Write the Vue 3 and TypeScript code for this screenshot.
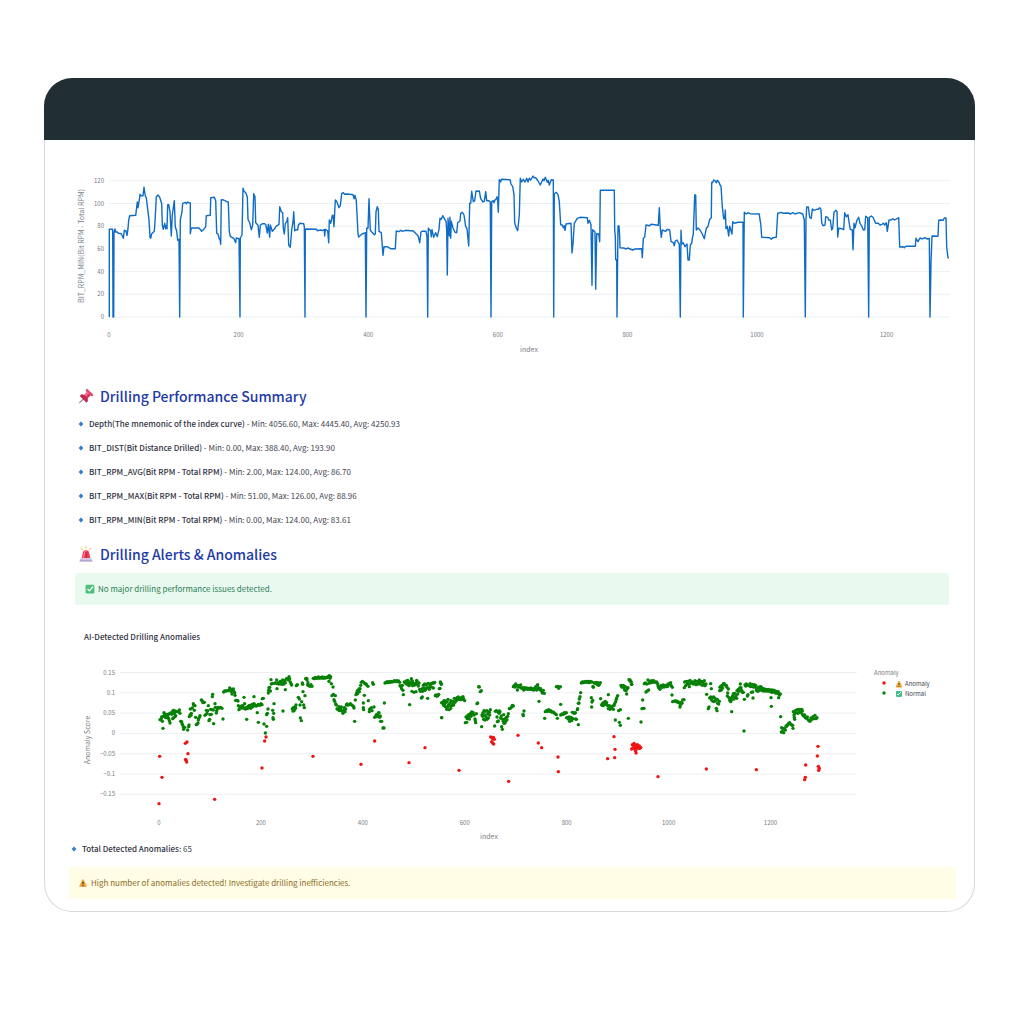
<script setup lang="ts">
interface Trace {
  dx: number
  dy: number
  pts: string
}
interface Point {
  x: number
  y: number
}

// Traces are stored at three units per chart pixel, split in windows with their own origin.
const unit = 3

function decode(t: Trace): Point[] {
  return t.pts
    .trim()
    .split(/\s+/)
    .map((pair) => {
      const [x, y] = pair.split(',').map(Number)
      return { x: t.dx + x / unit, y: t.dy + y / unit }
    })
}

const rpm: Trace[] = [
  {
    dx: 15,
    dy: 20,
    pts: `148,471 148,208 158,208 159,471 161,471 162,218 165,207 167,216 172,216 175,220 184,221 190,235 193,211 198,213 201,226 204,206 206,180 209,167 227,166 232,126 234,143 239,112 240,103 243,107 249,107 252,82 256,108 259,113 264,155 267,180 270,232 272,235 275,221 283,214 285,186 289,110 294,105 299,112 305,131 307,195 310,208 314,190 317,206 320,196 321,206 323,134 326,134 330,155 334,228 337,165 343,122 346,200 350,214 353,241 357,238 359,471 361,180 366,155 368,130 376,127 379,131 383,126 388,129 391,129 391,221 394,204 417,204 425,214 433,206 437,200 439,167 451,166 452,113 463,112 467,122 470,220 474,222 478,237 480,237 482,253 484,119 491,120 500,125 505,126 508,215 511,229 522,236 527,248 529,234 537,236 540,471 541,234 546,225 549,85 552,94 557,98 562,110 564,178 569,188 574,209 578,195 581,101 585,110 587,188 594,196 598,232 601,196 607,191 613,191 617,193 622,219 625,193 629,232 631,195 637,214 645,205 648,199 657,193 659,140 664,155 668,158 670,205 673,222 676,191 680,185 683,173 686,255 691,262 695,210 699,185 701,155 704,212 710,209 713,210 715,196 720,190`,
  },
  {
    dx: 235,
    dy: 20,
    pts: `60,190 71,191 73,200 75,471 76,207 110,208 112,212 122,210 127,212 133,209 134,228 136,208 143,213 146,248 148,180 152,190 157,166 159,166 162,200 166,120 170,124 177,143 181,137 185,101 190,98 194,103 203,102 219,104 222,116 225,106 229,122 234,221 236,231 246,222 256,218 258,471 260,205 264,205 267,116 271,211 276,217 283,224 286,222 288,155 292,140 295,148 297,214 304,218 309,286 312,260 321,260 332,266 346,266 349,213 356,215 362,211 367,214 377,211 400,213 414,227 419,248 423,216 426,214 438,214 441,230 443,471 445,205 452,213 454,230 456,209 461,232 467,218 472,230 477,208 480,175 484,178 488,167 498,185 500,209 502,345 504,175 508,228 510,172 512,235 514,184 519,204 525,217 530,218 533,188 540,183 542,160 547,157 552,165 557,200 561,206 566,258 569,130 572,130 575,94 580,125 584,122 588,93 594,94 598,93 602,116 609,126 613,124 617,95 620,122 627,122 631,126 633,471 635,125 640,122 642,128 645,120 649,116 651,110 653,124 655,157 658,59 662,66 664,58 690,59`,
  },
  {
    dx: 455,
    dy: 20,
    pts: `30,59 33,72 38,80 42,104 44,188 49,204 53,212 58,165 61,55 65,66 70,58 75,66 80,55 84,66 88,55 92,60 99,48 103,53 107,53 114,63 121,75 129,57 132,62 136,52 142,67 145,61 148,75 154,59 160,60 161,471 163,101 169,97 174,104 178,125 182,194 187,195 190,203 193,197 195,211 198,192 213,190 216,279 219,252 223,190 232,175 240,172 262,173 264,190 268,181 273,194 276,376 278,209 285,216 287,388 290,221 296,222 299,245 301,91 343,91 344,209 346,228 347,299 350,299 351,471 354,198 357,198 359,232 360,263 371,264 379,267 383,264 398,270 405,267 425,266 427,293 430,235 434,232 438,195 449,197 453,193 475,196 478,143 481,205 484,232 487,210 497,214 502,208 509,210 513,244 520,248 523,257 526,243 531,240 536,250 538,252 541,471 543,211 545,252 550,248 555,260 561,252 564,300 568,300 571,255 575,250 577,235 580,222 584,105 587,105 589,210 594,204 600,210 607,222 613,236 619,205 624,199 629,178 634,173 635,67 638,68 641,60 645,62 649,68 652,61 658,68 660,75 663,78 667,140 671,176 674,176 676,150 678,206 682,199 686,228 689,199 696,222 698,185 703,190 715,187`,
  },
  {
    dx: 675,
    dy: 20,
    pts: `55,187 69,187 70,471 73,157 79,162 84,158 90,161 118,162 120,180 122,190 125,232 149,233 154,238 158,233 169,232 173,160 180,158 184,157 190,160 205,159 212,162 218,158 225,162 238,158 248,162 253,180 256,471 258,180 260,141 265,141 269,172 274,175 277,147 281,151 290,148 295,148 299,143 303,149 305,188 309,197 315,195 317,170 323,172 326,180 331,180 335,210 338,205 342,157 348,151 351,155 353,231 356,205 365,206 371,209 374,158 379,170 384,164 386,180 391,208 397,210 399,269 402,190 405,203 411,180 416,172 420,190 425,198 430,210 434,209 437,169 443,173 446,471 448,172 454,168 459,172 467,190 475,190 480,195 486,193 490,190 494,195 499,188 502,214 504,200 507,180 513,180 518,176 524,180 536,173 539,261 548,260 553,263 558,259 586,259 588,235 594,245 600,234 607,237 614,233 622,237 628,235 630,471 633,309 636,228 654,229 656,181 664,180 669,181 673,174 678,174 680,262 684,293 687,293`,
  },
]

const rpmLine = rpm
  .flatMap(decode)
  .map((p) => `${p.x.toFixed(1)},${p.y.toFixed(1)}`)
  .join(' ')

const normal: Trace[] = [
  {
    dx: 15,
    dy: -30,
    pts: `300,299 304,297 305,291 307,304 309,325 309,289 312,278 314,284 316,289 317,293 319,283 321,290 323,287 324,293 326,296 328,302 330,309 326,282 332,279 335,283 337,276 340,271 342,276 343,281 345,273 338,296 341,293 345,290 347,287 348,275 352,275 356,274 358,270 360,280 362,304 365,305 366,311 368,315 370,321 371,328 374,322 383,330 386,320 387,315 388,290 390,285 391,267 393,286 394,280 397,264 400,251 401,255 403,271 405,257 407,292 409,314 411,313 414,309 415,300 416,296 418,292 420,287 424,240 427,243 431,247 433,247 429,248 435,286 438,283 439,271 441,280 443,272 445,257 447,302 449,298 450,284 452,268 454,283 456,269 457,230 458,223 460,270 461,311 465,251 466,262 469,279 470,273 472,267 474,262 478,264 482,262 486,265 489,297 491,216 494,213 498,213 502,212 506,212 509,204 511,207 513,214 514,209 516,222 518,208 520,207 521,214 524,218 525,226 527,241 531,241 534,243 535,257 537,269 539,265 541,260 544,264 546,257 549,258 551,265 552,232 554,251 556,267 558,263 560,298 562,266 564,259 566,263 568,256 570,261 572,265 574,257 576,253 578,260`,
  },
  {
    dx: 205,
    dy: 10,
    pts: `2,140 5,142 8,133 10,138 12,131 12,110 15,135 18,138 20,137 22,158 25,133 25,187 28,136 30,135 33,131 36,134 37,116 40,115 42,192 46,219 50,199 50,164 52,160 54,147 55,99 56,91 57,83 59,82 61,93 63,59 64,72 67,70 68,151 70,178 69,173 71,160 72,131 73,70 76,69 80,60 81,86 82,71 85,68 87,72 90,69 91,64 93,72 95,66 97,73 98,60 99,153 100,69 102,72 104,62 106,89 106,68 109,56 112,57 115,60 117,50 119,56 121,66 123,71 125,75 127,146 129,153 131,142 132,152 134,148 135,141 137,144 138,135 139,77 142,74 145,112 148,117 150,135 151,174 154,182 155,125 157,69 158,73 159,95 161,135 163,143 165,107 167,56 170,55 171,60 173,75 174,68 177,77 180,79 183,74 186,79 190,55 193,56 196,52 199,55 202,54 205,51 208,55 211,53 214,54 217,51 220,55 223,52 226,54 229,52 232,53 235,49 238,47 240,55 237,64 242,50 244,71 249,81 246,107 250,103 252,119 254,124 256,107 257,132 259,135 261,147 264,146 266,150 267,140 269,152 271,144 273,148 274,141 277,154 279,160 281,152 283,143 285,155 287,147 289,135 291,132 294,135 298,134 301,131 304,134 308,137 311,140 312,144 314,184 316,120 318,104 320,99 322,92 323,101 325,93 327,87 328,95 330,86 332,76 334,67 337,64 340,129 341,149 340,143 342,68 343,106 345,71 348,72 350,75 354,79 355,122 358,155 359,148 361,146 364,143 366,152 368,68 370,73 372,141 374,172 377,169 379,164 381,170 383,166 385,159 387,158 389,172 391,168 392,184 395,184 399,204 402,204 403,129 405,69 408,68 411,65 414,68 417,65 420,67 423,64 426,66 430,65 433,62 436,65 440,62 443,65 446,63 449,67 450,77 453,80 455,86 457,76 459,91 460,104 463,66 466,69 469,63 471,73 473,61 475,70 477,77 479,134 480,66 482,72 484,56 486,94 487,63 488,77 490,69 492,97 494,75 496,70 498,95 500,61 501,65 503,74 505,78 507,69 509,88 511,94 514,114 516,86 517,111 518,94 520,76 522,84 524,72 525,91 527,87 529,75 531,84 533,115 534,70 536,82 538,88 540,74 542,71 544,81 546,70 548,69 550,84 552,69 554,67 556,107 558,105 561,109 564,106 566,103 568,86 571,66 574,72 575,173`,
  },
  {
    dx: 395,
    dy: 10,
    pts: `2,68 4,73 0,85 5,173 5,128 8,130 10,125 11,136 13,121 14,131 16,140 18,127 20,148 21,125 22,141 24,118 25,135 27,149 28,137 30,129 32,145 33,122 35,137 37,132 39,124 41,135 43,115 45,127 47,118 49,122 51,113 53,118 55,111 57,118 60,115 62,119 65,112 67,118 69,110 71,117 74,122 76,188 78,171 80,187 82,176 83,167 85,173 87,163 88,177 90,165 92,160 93,169 95,156 97,162 99,157 102,165 105,177 107,188 106,182 109,161 111,131 113,129 116,80 118,81 121,95 124,92 125,200 126,165 128,169 129,158 131,178 132,152 134,165 135,180 137,154 138,171 140,152 141,178 143,162 145,174 147,155 149,165 151,149 148,157 164,198 166,154 169,152 171,171 172,185 173,155 175,183 177,160 178,153 180,155 182,174 184,168 185,200 187,208 188,178 190,184 191,164 192,190 194,177 195,189 197,184 199,172 201,179 203,169 205,161 208,146 211,145 214,142 217,136 220,138 220,80 223,76 225,81 227,72 230,76 232,90 234,81 236,77 239,81 242,75 245,85 248,83 251,90 254,83 257,87 260,84 263,88 266,85 269,88 272,84 275,89 278,86 281,90 284,85 287,88 288,79 290,90 293,74 295,83 297,124 299,89 302,86 305,94 307,99 310,91 313,100 250,167 249,163 252,153 314,175 316,155 320,151 323,154 326,149 329,154 332,152 335,156 339,156 342,158 345,161 349,164 352,175 349,80 354,79 356,85 361,80 362,133 362,165 366,162 370,163 373,158 376,160 379,158 380,173 383,172 385,177 387,171 389,184 391,178 393,172 395,182 397,157 399,176 401,159 404,160 406,158 407,177 409,178 412,149 413,146 415,194 415,130 417,129 418,117 420,110 422,98 424,69 427,66 430,68 433,65 436,67 439,64 442,67 445,64 448,68 451,64 454,113 455,141 456,126 458,121 455,66 459,79 460,82 462,68 465,70 468,67 472,74 474,68 476,76 478,72 481,68 482,116 485,135 487,131 489,137 491,127 493,134 496,124 498,132 500,128 503,137 505,104 505,146 508,137 510,148 512,140 515,145 518,138 520,148 522,137 524,131 526,180 527,125 529,118 530,114 533,107 536,152 538,187 541,196 541,149 543,76 545,81 547,78 550,76 552,84 554,90 556,80 558,92 560,102 562,86 564,83 565,175 567,59 570,62 573,65 575,73`,
  },
  {
    dx: 585,
    dy: 10,
    pts: `0,60 3,66 5,73 33,186 36,146 38,120 39,145 42,145 43,71 46,69 48,96 50,72 52,93 54,60 56,90 57,70 60,64 63,68 65,62 68,67 71,62 74,66 77,67 80,66 83,71 84,78 86,83 88,79 90,88 93,77 96,82 99,75 102,81 105,76 108,80 111,75 113,79 116,71 119,73 122,68 124,77 127,82 126,105 128,125 131,124 135,123 138,123 141,126 144,125 147,128 150,141 151,135 154,127 156,130 158,120 162,119 163,83 164,66 167,77 169,64 172,72 174,64 176,72 178,80 180,61 182,70 185,68 187,66 190,72 193,68 195,62 198,74 200,64 203,72 206,65 208,60 210,72 212,66 215,64 217,76 219,67 221,73 223,62 225,77 228,72 230,103 235,146 237,141 239,114 242,111 242,71 244,86 245,120 247,112 249,124 251,111 253,124 255,115 257,122 259,145 261,152 262,118 263,130 266,132 268,124 269,92 270,82 272,79 274,90 276,76 278,84 280,72 282,70 285,75 289,76 291,82 292,108 293,99 295,87 297,113 299,121 301,115 302,125 304,120 305,155 306,112 308,108 310,101 312,117 314,100 316,111 318,107 320,115 321,92 323,102 325,88 327,94 329,84 331,72 333,83 335,91 337,97 340,97 342,213 343,118 345,75 347,78 349,72 352,76 352,108 354,104 357,77 360,71 362,80 364,97 366,73 369,114 368,96 370,81 373,74 375,81 377,76 379,91 381,85 383,94 385,82 387,92 389,81 391,88 393,80 395,91 398,85 400,93 403,87 406,93 409,88 412,93 415,88 418,94 421,90 423,113 424,139 425,97 427,90 430,96 433,91 436,99 439,94 442,100 445,95 446,113 448,105 451,102 452,170 454,216 455,203 457,215 459,207 461,218 463,205 466,210 468,198 470,199 473,194 476,190 479,188 482,193 485,195 488,196 489,205 490,155 492,165 494,178 493,172 495,160 497,151 500,158 502,149 504,160 506,148 508,157 511,150 513,158 515,148 517,153 518,164 521,168 524,165 526,173 529,175 532,171 535,180 538,183 541,183 543,174 546,178 549,170 552,176 555,166 558,176 561,173`,
  },
]

const anomalies: Trace[] = [
  { dx: 15, dy: -30, pts: `297,551 299,409 306,472 376,370 381,366 384,401 377,418 378,421 380,426 464,538` },
  { dx: 205, dy: 10, pts: `44,243 48,231 36,324 189,289 333,313 374,243 477,308 525,263` },
  {
    dx: 395,
    dy: 10,
    pts: `57,331 152,231 156,232 160,232 158,236 163,238 155,245 158,249 161,252 206,364 234,226 295,249 305,263 354,291 355,335 503,296 522,230 525,268 524,293`,
  },
  {
    dx: 585,
    dy: 10,
    pts: `5,267 7,254 9,264 12,250 12,258 14,265 16,272 18,279 18,257 20,262 22,254 24,259 26,265 28,258 30,265 32,262 15,255 18,270 84,350 229,327 379,329 527,315 526,352 524,359 564,259 562,288 565,319 568,325 566,331`,
  },
]

const normalPoints = normal.flatMap(decode)
const anomalyPoints = anomalies.flatMap(decode)

const rpmRows = [120, 100, 80, 60, 40, 20, 0].map((v) => ({ label: String(v), y: 177 - v * 1.135 }))
const rpmCols = [0, 200, 400, 600, 800, 1000, 1200].map((v) => ({ label: String(v), x: 64 + v * 0.648 }))
const scoreRows = ['0.15', '0.1', '0.05', '0', '−0.05', '−0.1', '−0.15'].map((label, i) => ({
  label,
  y: 22.5 + i * 20.3,
}))
const scoreCols = [0, 200, 400, 600, 800, 1000, 1200].map((v) => ({ label: String(v), x: 114 + v * 0.5096 }))

const summary = [
  { name: 'Depth(The mnemonic of the index curve)', min: '4056.60', max: '4445.40', avg: '4250.93' },
  { name: 'BIT_DIST(Bit Distance Drilled)', min: '0.00', max: '388.40', avg: '193.90' },
  { name: 'BIT_RPM_AVG(Bit RPM - Total RPM)', min: '2.00', max: '124.00', avg: '86.70' },
  { name: 'BIT_RPM_MAX(Bit RPM - Total RPM)', min: '51.00', max: '126.00', avg: '88.96' },
  { name: 'BIT_RPM_MIN(Bit RPM - Total RPM)', min: '0.00', max: '124.00', avg: '83.61' },
]
</script>

<template>
  <main class="page">
    <article class="card">
      <header class="bar"></header>
      <div class="body">
        <svg class="chart" viewBox="0 0 929 240" role="img" aria-label="BIT_RPM_MIN by index">
          <line v-for="r in rpmRows" :key="r.label" class="grid" x1="64" x2="905" :y1="r.y" :y2="r.y" />
          <text v-for="r in rpmRows" :key="'t' + r.label" class="tick end" x="59" :y="r.y + 2">{{ r.label }}</text>
          <text v-for="c in rpmCols" :key="c.label" class="tick mid" :x="c.x" y="197">{{ c.label }}</text>
          <text class="axis mid" x="484" y="212">index</text>
          <text class="axis mid" transform="translate(39 106) rotate(-90)">BIT_RPM_MIN(Bit RPM - Total RPM)</text>
          <polyline class="rpm" :points="rpmLine" />
        </svg>

        <section class="block">
          <h2>
            <svg class="emoji" viewBox="0 0 32 32" aria-hidden="true">
              <path d="M12 19 2 29l-1 2 3-1 10-9z" fill="#8f8a99" />
              <path d="m18 2 12 11c1 2-1 4-3 3l-2-1-6 6c1 4 0 7-2 8L4 16c1-3 5-4 8-2l6-6-2-2c-1-2 0-4 2-4z" fill="#d7375f" />
              <path d="m18 2 12 11c1 2-1 4-3 3L16 6c-1-2 0-4 2-4z" fill="#e84a70" />
              <path d="M4 16c1-3 5-4 8-2l7 7c1 4 0 7-2 8z" fill="#c12a50" />
              <path d="m13 14 6-6 3 3-6 6z" fill="#f06a8a" />
            </svg>
            Drilling Performance Summary
          </h2>
          <ul class="list">
            <li v-for="s in summary" :key="s.name">
              <svg class="diamond" viewBox="0 0 10 10" aria-hidden="true">
                <path d="m5 1 4 4-4 4-4-4z" fill="#2f7fd0" />
              </svg>
              <span><strong>{{ s.name }}</strong> - Min: {{ s.min }}, Max: {{ s.max }}, Avg: {{ s.avg }}</span>
            </li>
          </ul>
        </section>

        <section class="block alerts">
          <h2>
            <svg class="emoji" viewBox="0 0 32 32" aria-hidden="true">
              <path d="M16 1v4M6 4l3 4M26 4l-3 4" stroke="#f6c445" stroke-width="2" stroke-linecap="round" />
              <path d="m7 26 3-14c1-5 11-5 12 0l3 14z" fill="#ee3d55" />
              <path d="m11 23 2-10c0-2 1-3 3-3" fill="none" stroke="#ff8796" stroke-width="2" stroke-linecap="round" />
              <path d="M17 14v8" stroke="#c8284a" stroke-width="3" stroke-linecap="round" />
              <path d="M5 24h22l2 7H3z" fill="#d3c6e2" />
              <path d="M4 28h24l1 3H3z" fill="#b5a6cc" />
            </svg>
            Drilling Alerts &amp; Anomalies
          </h2>
          <p class="notice ok" role="status">
            <svg class="mark" viewBox="0 0 16 16" aria-hidden="true">
              <rect x="1" y="1" width="14" height="14" rx="2" fill="#4cbf7b" />
              <path d="m4 8 3 3 6-7" fill="none" stroke="#fff" stroke-width="2" />
            </svg>
            No major drilling performance issues detected.
          </p>
        </section>

        <h3>AI-Detected Drilling Anomalies</h3>
        <svg class="chart" viewBox="0 0 929 193" role="img" aria-label="Anomaly score by index">
          <line v-for="r in scoreRows" :key="r.label" class="grid" x1="75" x2="812" :y1="r.y" :y2="r.y" />
          <text v-for="r in scoreRows" :key="'t' + r.label" class="tick end" x="70" :y="r.y + 2">{{ r.label }}</text>
          <text v-for="c in scoreCols" :key="c.label" class="tick mid" :x="c.x" y="175">{{ c.label }}</text>
          <text class="axis mid" x="444" y="189">index</text>
          <text class="axis mid" transform="translate(45 90) rotate(-90)">Anomaly Score</text>
          <circle v-for="(p, i) in normalPoints" :key="'n' + i" class="normal" :cx="p.x" :cy="p.y" r="1.7" />
          <circle v-for="(p, i) in anomalyPoints" :key="'a' + i" class="anomaly" :cx="p.x" :cy="p.y" r="1.7" />
          <text class="legend-title" x="829" y="25">Anomaly</text>
          <circle class="anomaly" cx="839" cy="33" r="1.7" />
          <circle class="normal" cx="839" cy="43" r="1.7" />
          <path d="m854 31 3 6h-6z" fill="#e8a83a" stroke="#e8a83a" stroke-linejoin="round" />
          <path d="M854 33v2M854 36v1" stroke="#5a4420" />
          <rect x="851" y="41" width="6" height="6" rx="1" fill="#3fbf8a" />
          <path d="m852 44 1 1 3-3" fill="none" stroke="#fff" />
          <text class="legend" x="860" y="36">Anomaly</text>
          <text class="legend" x="860" y="46">Normal</text>
        </svg>

        <p class="total">
          <svg class="diamond" viewBox="0 0 10 10" aria-hidden="true">
            <path d="m5 1 4 4-4 4-4-4z" fill="#2f7fd0" />
          </svg>
          <span><strong>Total Detected Anomalies:</strong> 65</span>
        </p>
        <p class="notice warn" role="alert">
          <svg class="mark" viewBox="0 0 16 16" aria-hidden="true">
            <path d="m8 3 5 10H3z" fill="#eda63c" stroke="#eda63c" stroke-width="2" stroke-linejoin="round" />
            <path d="M8 6v4M8 11v2" stroke="#4a3a20" stroke-width="2" />
          </svg>
          High number of anomalies detected! Investigate drilling inefficiencies.
        </p>
      </div>
    </article>
  </main>
</template>

<style>
body {
  margin: 0;
  background: #fff;
}
</style>

<style scoped>
.page {
  padding: 78px 49px 111px 44px;
  font-family: 'Noto Sans CJK SC', 'Open Sans', sans-serif;
  font-size: 8px;
  line-height: 12px;
  color: #42454f;
}
.bar {
  height: 62px;
  background: #212e33;
  border-radius: 28px 28px 0 0;
}
.body {
  border: 1px solid #d9d9d9;
  border-top: 0;
  border-radius: 0 0 28px 28px;
  padding-bottom: 12px;
}
.chart {
  display: block;
  width: 100%;
}
.grid {
  stroke: #edf0f3;
}
.tick {
  font-size: 6px;
  fill: #777a82;
}
.axis {
  font-size: 7px;
  fill: #777a82;
}
.mid {
  text-anchor: middle;
}
.end {
  text-anchor: end;
}
.legend-title {
  font-size: 6px;
  fill: #777a82;
}
.legend {
  font-size: 6px;
  fill: #42454f;
}
.rpm {
  fill: none;
  stroke: #0f6cc6;
  stroke-width: 1.4;
  stroke-linejoin: round;
}
.normal {
  fill: #078007;
}
.anomaly {
  fill: #f01414;
}
.block {
  padding: 0 25px 0 30px;
}
h2 {
  display: flex;
  align-items: center;
  gap: 6px;
  margin: 0;
  padding-left: 3px;
  font-size: 14px;
  line-height: 32px;
  font-weight: 500;
  color: #1e3ba6;
}
.emoji {
  width: 16px;
  height: 16px;
}
.list {
  display: flex;
  flex-direction: column;
  gap: 12px;
  margin: 6px 0 12px;
  padding: 0 0 0 3px;
  list-style: none;
}
.list li,
.total {
  display: flex;
  align-items: center;
  gap: 5px;
}
strong {
  font-weight: 500;
  color: #31333f;
}
.diamond {
  width: 6px;
  height: 6px;
}
.notice {
  display: flex;
  align-items: center;
  gap: 3px;
  margin: 3px 0 0;
  padding: 10px;
  border-radius: 3px;
}
.mark {
  width: 10px;
  height: 10px;
}
.ok {
  background: #e8f9ef;
  color: #2f7d52;
}
.warn {
  margin: 12px 18px 0 24px;
  padding-left: 9px;
  background: #fffde6;
  color: #8c6a1e;
}
h3 {
  margin: 26px 0 7px 39px;
  font-size: 8px;
  line-height: 12px;
  font-weight: 500;
  color: #31333f;
}
.total {
  margin: 0 0 0 26px;
}
</style>
